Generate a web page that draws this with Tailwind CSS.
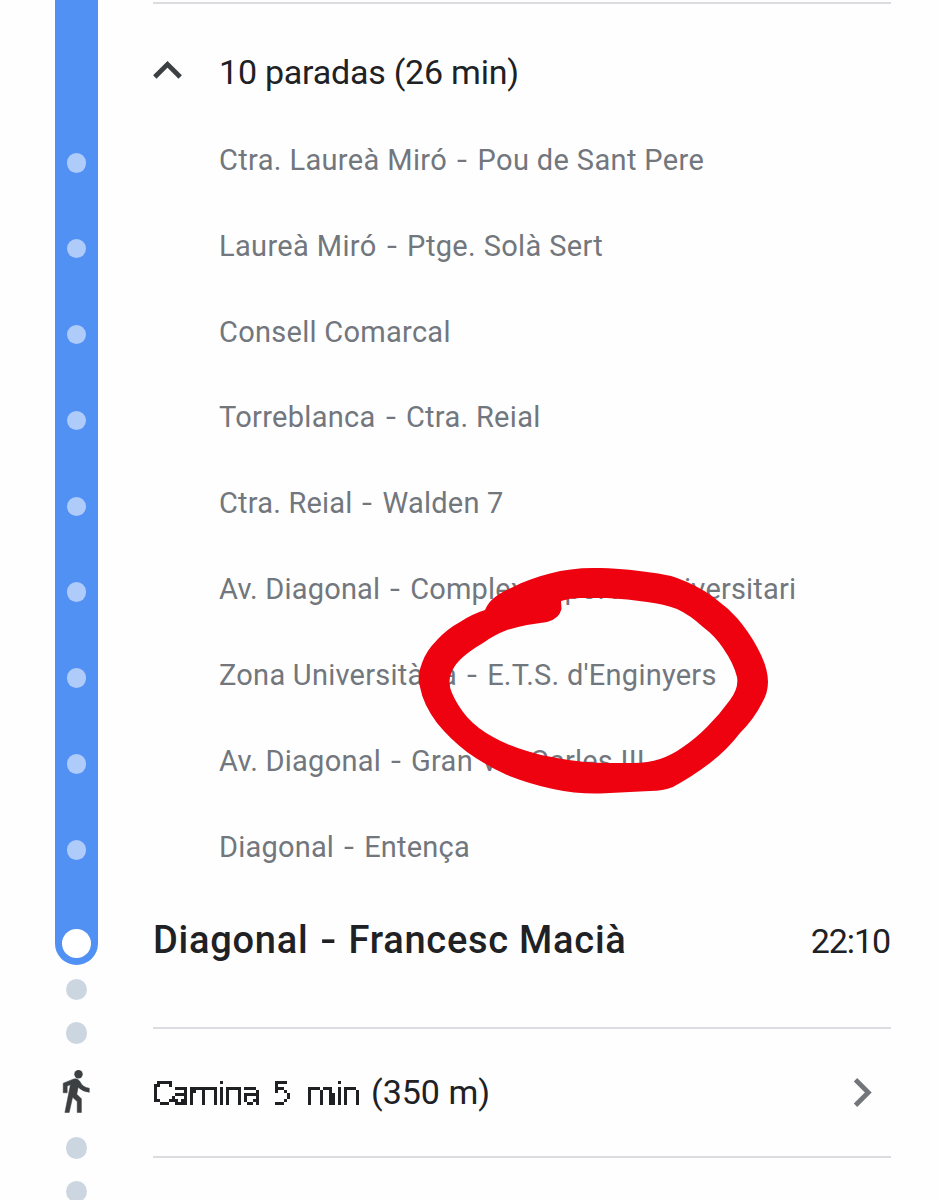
<!DOCTYPE html>
<html lang="es">
<head>
<meta charset="utf-8">
<title>Ruta</title>
<script src="https://cdn.jsdelivr.net/npm/@tailwindcss/browser@4"></script>
</head>
<body class="bg-[#fefefe]">
<main class="relative flex h-[1200px] w-[939px] overflow-hidden font-['Roboto','Liberation_Sans',sans-serif] text-[#202124]">
  <aside class="ml-[54.5px] flex w-[43.5px] shrink-0 flex-col items-center">
    <div class="flex h-[965px] w-full shrink-0 flex-col items-center rounded-b-full bg-[#5191f3] pt-[153px]">
      <div class="flex flex-col gap-[66.4px]">
        <i class="size-[19.5px] rounded-full bg-[#aecbfa]"></i><i class="size-[19.5px] rounded-full bg-[#aecbfa]"></i><i class="size-[19.5px] rounded-full bg-[#aecbfa]"></i><i class="size-[19.5px] rounded-full bg-[#aecbfa]"></i><i class="size-[19.5px] rounded-full bg-[#aecbfa]"></i><i class="size-[19.5px] rounded-full bg-[#aecbfa]"></i><i class="size-[19.5px] rounded-full bg-[#aecbfa]"></i><i class="size-[19.5px] rounded-full bg-[#aecbfa]"></i><i class="size-[19.5px] rounded-full bg-[#aecbfa]"></i>
      </div>
      <i class="mt-[69px] size-[29px] rounded-full bg-white"></i>
    </div>
    <i class="mt-[13.5px] size-[21.5px] shrink-0 rounded-full bg-[#ccd6e1]"></i>
    <i class="mt-[22px] size-[21.5px] shrink-0 rounded-full bg-[#ccd6e1]"></i>
    <svg class="mt-[25px] h-[45px] w-[28px] shrink-0" viewBox="0 0 28 45" fill="#3c4043"><circle cx="16.5" cy="5.2" r="4.2"/><path d="M1.2 14.2 11.8 9.9Q15.5 9 17.6 12Q20.5 18.5 27.3 19.2V23.3Q20.5 22.7 16.2 18.2L14.8 25.2 19.4 29.8V43.5H15.2V32.6L10.6 28.3 7.2 43.5H2.9L8.4 15.8 5.2 17.1V23.8H1.2Z" stroke="#3c4043" stroke-width=".5"/></svg>
    <i class="mt-[23.5px] size-[21.5px] shrink-0 rounded-full bg-[#ccd6e1]"></i>
    <i class="mt-[22px] size-[21.5px] shrink-0 rounded-full bg-[#ccd6e1]"></i>
  </aside>

  <section class="ml-[55px] flex w-[738px] flex-col whitespace-nowrap pt-[2px]">
    <hr class="border-t-2 border-[#dadce0]">
    <header class="flex h-[113px] items-center pt-[24px]">
      <svg class="-mt-[5px] h-[20px] w-[29px]" viewBox="0 0 29 20" fill="none" stroke="#3c4043" stroke-width="4.8"><path d="M1.8 17 14.5 4.3 27.2 17"/></svg>
      <span class="ml-[37px] text-[34px] tracking-[-0.23px]">10 paradas (26 min)</span>
    </header>
    <ul class="pl-[66px] pt-[0.6px] text-[29px] text-[#72767d]">
      <li class="flex h-[85.9px] items-center tracking-[0.36px]"><span>Ctra. Laureà Miró <span class="mx-[3.5px] inline-block scale-x-125">-</span> Pou de Sant Pere</span></li>
      <li class="flex h-[85.9px] items-center tracking-[0.35px]"><span>Laureà Miró <span class="mx-[3.5px] inline-block scale-x-125">-</span> Ptge. Solà Sert</span></li>
      <li class="flex h-[85.9px] items-center tracking-[0.28px]"><span>Consell Comarcal</span></li>
      <li class="flex h-[85.9px] items-center tracking-[0.3px]"><span>Torreblanca <span class="mx-[3.5px] inline-block scale-x-125">-</span> Ctra. Reial</span></li>
      <li class="flex h-[85.9px] items-center tracking-[0.2px]"><span>Ctra. Reial <span class="mx-[3.5px] inline-block scale-x-125">-</span> Walden 7</span></li>
      <li class="flex h-[85.9px] items-center tracking-[0.18px]"><span>Av. Diagonal <span class="mx-[3.5px] inline-block scale-x-125">-</span> Complex Esportiu Universitari</span></li>
      <li class="flex h-[85.9px] items-center tracking-[0.25px]"><span>Zona Universitària <span class="mx-[3.5px] inline-block scale-x-125">-</span> E.T.S. d'Enginyers</span></li>
      <li class="flex h-[85.9px] items-center tracking-[0.24px]"><span>Av. Diagonal <span class="mx-[3.5px] inline-block scale-x-125">-</span> Gran Via Carles III</span></li>
      <li class="flex h-[85.9px] items-center tracking-[0.2px]"><span>Diagonal <span class="mx-[3.5px] inline-block scale-x-125">-</span> Entença</span></li>
    </ul>
    <div class="flex h-[136.4px] items-start justify-between pt-[27.4px]">
      <h2 class="text-[38px] font-medium leading-[44px] tracking-[0.75px]">Diagonal <span class="mx-[3px] inline-block scale-x-125">-</span> Francesc Macià</h2>
      <time class="mr-px text-[34px] leading-[46px] tracking-[-1.1px]">22:10</time>
    </div>
    <hr class="border-t-2 border-[#dadce0]">
    <div class="flex h-[127px] items-center">
      <svg width="0" height="0" class="absolute"><filter id="pixels" filterUnits="userSpaceOnUse" primitiveUnits="userSpaceOnUse" x="0" y="0" width="240" height="48" color-interpolation-filters="sRGB"><feFlood x="1" y="1" width="1" height="1" flood-color="#000" result="dot"/><feOffset in="dot" x="0" y="0" width="3" height="3" result="cell"/><feTile in="cell" result="grid"/><feComposite in="SourceGraphic" in2="grid" operator="in"/><feComponentTransfer><feFuncA type="discrete" tableValues="0 1"/></feComponentTransfer><feMorphology operator="dilate" radius="1"/></filter></svg>
      <div class="-ml-[2px] flex w-[220px] font-['DejaVu_Sans'] text-[32px] tracking-[-2.3px] [-webkit-text-stroke:0.3px_#202124]">
        <span class="w-[121px] [filter:url(#pixels)]">Camina</span>
        <span class="w-[33px] [filter:url(#pixels)]">5</span>
        <span class="[filter:url(#pixels)]">min</span>
      </div>
      <span class="text-[34px]">(350 m)</span>
      <svg class="ml-auto mr-[19px] h-[29px] w-[19px]" viewBox="0 0 19 29" fill="none" stroke="#72767b" stroke-width="4.8"><path d="M2.5 1.7 15.3 14.5 2.5 27.3"/></svg>
    </div>
    <hr class="border-t-2 border-[#dadce0]">
  </section>

  <svg class="absolute left-0 top-0" width="939" height="1200" fill="#ee0210" fill-rule="evenodd"><path d="M485 610C490 598 500 593 513 587C535 576 563 568 593 568C615 568 632 570 647 572Q670 574 687 582Q705 590 717 600Q728 608 737 618Q749 632 757 647Q768 667 768 682Q768 693 762 703Q754 719 740 733Q727 750 710 763Q693 776 673 787Q663 791 650 791L600 793.500Q576 794 553 789Q530 784 507 775Q485 765 467 752Q450 739 437 723Q423 704 420 687Q417 674 422 663Q426 651 437 640Q447 629 460 622Q472 614 485 610ZM561 601Q570 598 580 598H607Q628 599 647 602Q664 604 677 609Q690 615 703 627Q715 636 723 648Q734 664 737 677Q739 688 730 700Q720 714 707 727Q695 739 683 747Q672 755 660 759Q648 763 633 763H610Q582 763 557 758Q542 756 527 751Q509 746 493 737Q478 729 467 717Q457 705 452 693Q447 682 452 671Q456 663 463 657Q471 650 483 643Q494 635 507 630Q517 627 527 625L547 622Q559 619 561.500 609Z"/></svg>
</main>
</body>
</html>
